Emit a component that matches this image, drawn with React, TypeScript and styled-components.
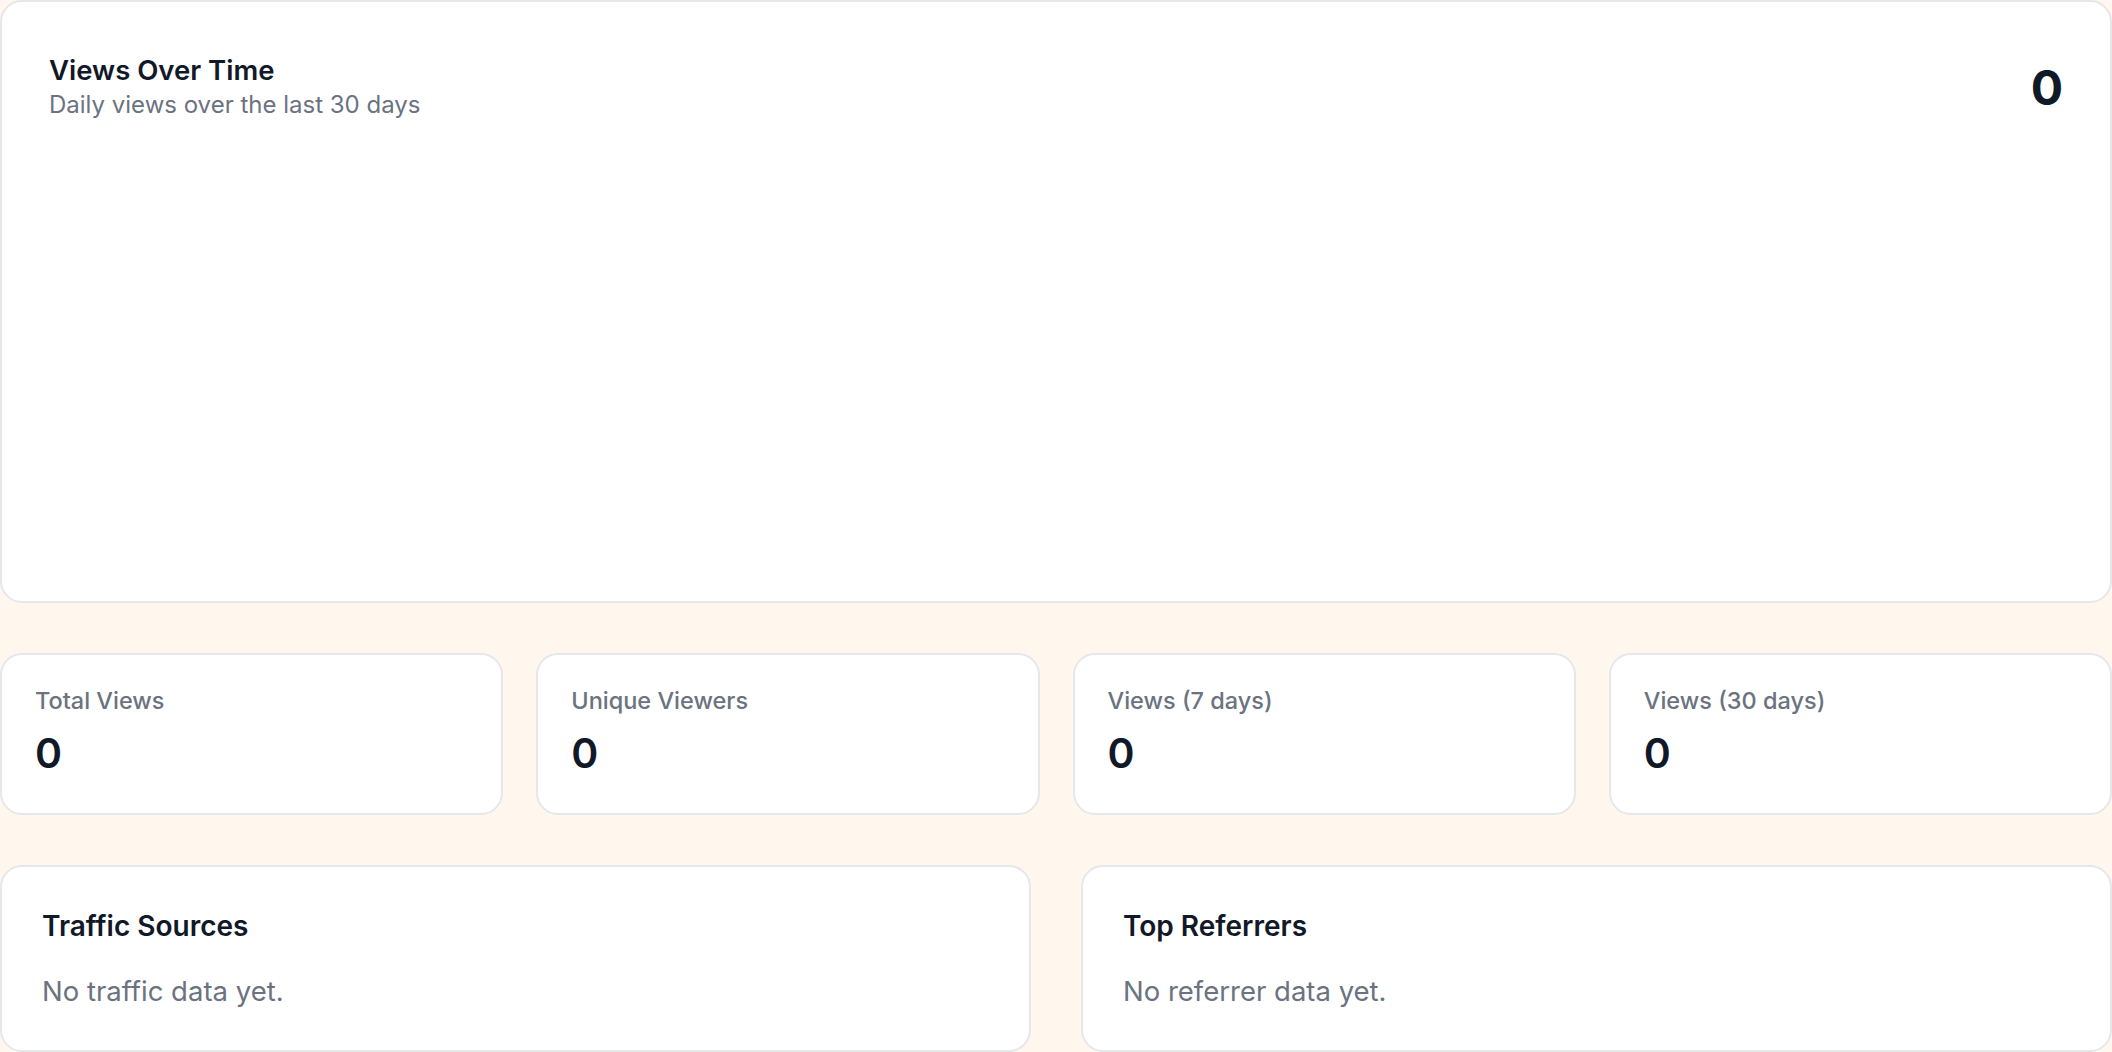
import styled, { createGlobalStyle } from 'styled-components';

const GlobalStyle = createGlobalStyle`
  html, body {
    margin: 0;
    padding: 0;
    background: #fff7ed;
    font-family: Inter, "Noto Sans", "Liberation Sans", sans-serif;
    -webkit-font-smoothing: antialiased;
  }
  * {
    box-sizing: border-box;
  }
`;

const Page = styled.main`
  display: flex;
  flex-direction: column;
  gap: 50px;
  width: 2112px;
  height: 1052px;
  overflow: hidden;
`;

const Card = styled.section`
  background: #ffffff;
  border: 2px solid #e5e7eb;
  border-radius: 22px;
`;

const ChartCard = styled(Card)`
  height: 603px;
  padding: 50px 47px 50px 47px;
`;

const ChartHeader = styled.div`
  display: flex;
  justify-content: space-between;
  align-items: flex-start;
`;

const TitleBlock = styled.div`
  display: flex;
  flex-direction: column;
  gap: 2px;
`;

const ChartTitle = styled.h2`
  margin: 0;
  color: #111827;
  font-size: 27.5px;
  font-weight: 600;
  line-height: 36px;
`;

const ChartSubtitle = styled.p`
  margin: 0;
  color: #6b7280;
  font-size: 24px;
  line-height: 30px;
`;

const BigCount = styled.div`
  color: #111827;
  font-size: 48px;
  font-weight: 700;
  line-height: 72px;
`;

const StatGrid = styled.div`
  display: grid;
  grid-template-columns: repeat(4, 1fr);
  gap: 33px;
`;

const StatCard = styled(Card)`
  height: 162px;
  padding: 30px 33px;
  display: flex;
  flex-direction: column;
  gap: 12px;
`;

const StatLabel = styled.span`
  color: #6b7280;
  font-size: 23.5px;
  font-weight: 500;
  line-height: 32px;
`;

const StatValue = styled.span`
  color: #111827;
  font-size: 41px;
  font-weight: 600;
  line-height: 48px;
`;

const BottomGrid = styled.div`
  display: grid;
  grid-template-columns: 1fr 1fr;
  gap: 50px;
`;

const ListCard = styled(Card)`
  height: 187px;
  padding: 42px 40px;
  display: flex;
  flex-direction: column;
  gap: 31px;
`;

const ListTitle = styled.h3`
  margin: 0;
  color: #111827;
  font-size: 28px;
  font-weight: 600;
  line-height: 34px;
`;

const EmptyText = styled.p`
  margin: 0;
  color: #6b7280;
  font-size: 27.5px;
  line-height: 34px;
`;

const stats = [
  { label: 'Total Views', value: 0 },
  { label: 'Unique Viewers', value: 0 },
  { label: 'Views (7 days)', value: 0 },
  { label: 'Views (30 days)', value: 0 },
];

function App(): JSX.Element {
  return (
    <>
      <GlobalStyle />
      <Page>
        <ChartCard>
          <ChartHeader>
            <TitleBlock>
              <ChartTitle>Views Over Time</ChartTitle>
              <ChartSubtitle>Daily views over the last 30 days</ChartSubtitle>
            </TitleBlock>
            <BigCount>0</BigCount>
          </ChartHeader>
        </ChartCard>

        <StatGrid>
          {stats.map((s) => (
            <StatCard key={s.label}>
              <StatLabel>{s.label}</StatLabel>
              <StatValue>{s.value}</StatValue>
            </StatCard>
          ))}
        </StatGrid>

        <BottomGrid>
          <ListCard>
            <ListTitle>Traffic Sources</ListTitle>
            <EmptyText>No traffic data yet.</EmptyText>
          </ListCard>
          <ListCard>
            <ListTitle>Top Referrers</ListTitle>
            <EmptyText>No referrer data yet.</EmptyText>
          </ListCard>
        </BottomGrid>
      </Page>
    </>
  );
}

export default App;
